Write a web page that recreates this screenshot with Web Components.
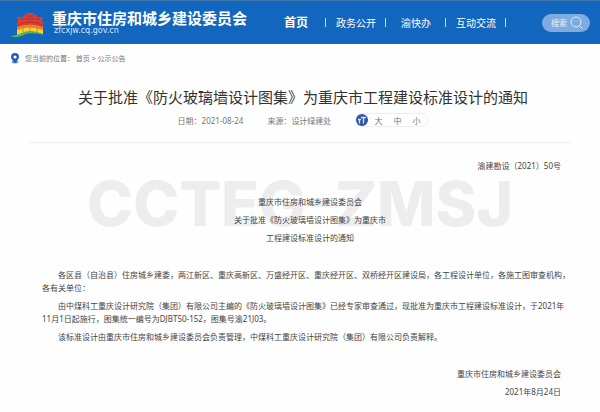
<!DOCTYPE html>
<html lang="zh-CN">
<head>
<meta charset="UTF-8">
<meta name="viewport" content="width=device-width, initial-scale=1">
<title>重庆市住房和城乡建设委员会</title>
<style>
    body {
        margin: 0;
        background-color: #fefefe;
        color: #444;
        font-family: "Noto Sans", "Noto Sans CJK SC", sans-serif;
        font-size: 8px;
    }
</style>
</head>
<body>
<site-header>
    <a slot="nav" class="current" href="#">首页</a>
    <a slot="nav" href="#">政务公开</a>
    <a slot="nav" href="#">渝快办</a>
    <a slot="nav" href="#">互动交流</a>
</site-header>
<bread-crumb></bread-crumb>
<notice-article>
    <span slot="title">关于批准《防火玻璃墙设计图集》为重庆市工程建设标准设计的通知</span>
    <span slot="date">2021-08-24</span>
    <span slot="source">设计绿建处</span>
    <font-sizer slot="tools"></font-sizer>
    <notice-body></notice-body>
</notice-article>

<script>
class SiteHeader extends HTMLElement {
    constructor() {
        super();
        this.attachShadow({ mode: 'open' });
    }

    connectedCallback() {
        this.render();
    }

    render() {
        this.shadowRoot.innerHTML = `
            <style>
                :host {
                    display: block;
                    background-color: #1366be;
                    border-top: 1px solid #3f76ac;
                    color: white;
                }
                header {
                    display: flex;
                    align-items: center;
                    height: 43px;
                    padding: 0 10px;
                }
                .logo {
                    width: 36px;
                    height: 28px;
                    margin-top: 2px;
                }
                .brand {
                    margin-left: 6px;
                    line-height: 1;
                }
                .name {
                    font-size: 15px;
                    font-weight: bold;
                    line-height: 16px;
                    white-space: nowrap;
                }
                .domain {
                    font: 8px/9px "DejaVu Sans", sans-serif;
                    color: #d5e6f8;
                    padding-left: 2px;
                }
                nav {
                    flex: 1;
                    display: grid;
                    grid-template-columns: 60px 60px 60px 60px;
                    margin-left: 19px;
                }
                ::slotted(a) {
                    color: white;
                    font-size: 10px;
                    line-height: 12px;
                    text-align: center;
                    text-decoration: none;
                    background: linear-gradient(#c3dcf5, #c3dcf5) right center / 1px 9px no-repeat;
                }
                ::slotted(a.current) {
                    font-size: 12px;
                    font-weight: bold;
                }
                form {
                    display: flex;
                    align-items: center;
                    width: 48px;
                    height: 18px;
                    box-sizing: border-box;
                    padding: 0 7px 0 9px;
                    border-radius: 9px;
                    background-color: #7eace0;
                }
                input {
                    flex: 1;
                    min-width: 0;
                    padding: 0;
                    border: 0;
                    outline: 0;
                    background: none;
                    color: white;
                    font: inherit;
                }
                input::placeholder {
                    color: #e8f2fc;
                }
                button {
                    display: flex;
                    padding: 0;
                    border: 0;
                    background: none;
                    cursor: pointer;
                }
            </style>
            <header>
                <svg class="logo" viewBox="0 0 36 28" aria-hidden="true">
                    <path d="M7 7h6V5h3V3h8v2h3v2h6l-1 4 1 4v4l-7-2H14l-7 3v-5l1-4z" fill="#e23b30"/>
                    <path d="M10 9h5M25 9h5M17 6h6M16 9h8" stroke="#8e3a4a" stroke-width="1"/>
                    <path d="M8 15q12-6 24 0" fill="none" stroke="#9c3a3a" stroke-width="1"/>
                    <path d="M7 17q13-5 26 0v3q-13-4-26 1z" fill="#f08022"/>
                    <path d="M7 20q13-5 26 0v4q-13-5-26 1z" fill="#f4d435"/>
                    <path d="M13 16v6M20 15v6M27 16v6" stroke="#c8862e" stroke-width="1"/>
                    <path d="M0 26q9-1 14-4 9-3 20 3-11-3-18-1-8 5-16 2z" fill="#55b553"/>
                </svg>
                <div class="brand">
                    <div class="name">重庆市住房和城乡建设委员会</div>
                    <div class="domain">zfcxjw.cq.gov.cn</div>
                </div>
                <nav><slot name="nav"></slot></nav>
                <form>
                    <input type="text" placeholder="搜索" aria-label="搜索">
                    <button type="button" aria-label="提交搜索">
                        <svg width="13" height="13" viewBox="0 0 13 13" fill="none" stroke="#d9e9fa" stroke-width="1">
                            <circle cx="6" cy="6" r="5"/>
                            <path d="M9.500 9.500l3 3"/>
                        </svg>
                    </button>
                </form>
            </header>
        `;
    }
}

class BreadCrumb extends HTMLElement {
    constructor() {
        super();
        this.attachShadow({ mode: 'open' });
    }

    connectedCallback() {
        this.shadowRoot.innerHTML = `
            <style>
                :host {
                    display: flex;
                    align-items: center;
                    gap: 6px;
                    height: 28px;
                    padding: 0 11px;
                    color: #777;
                    font-size: 7px;
                }
                a {
                    color: inherit;
                    text-decoration: none;
                }
            </style>
            <svg width="8" height="11" viewBox="0 0 8 11" aria-hidden="true">
                <path d="M0 9q4-3 8 0-4 3-8 0z" fill="#5b93cd"/>
                <path d="M4 10Q0 6 0 4a4 4 0 0 1 8 0q0 2-4 6z" fill="#1f5fae"/>
                <circle cx="4" cy="4" r="1.600" fill="#fff"/>
            </svg>
            <span>您当前的位置： <a href="#">首页</a> &gt; <a href="#">公示公告</a></span>
        `;
    }
}

class FontSizer extends HTMLElement {
    constructor() {
        super();
        this.attachShadow({ mode: 'open' });
    }

    connectedCallback() {
        this.shadowRoot.innerHTML = `
            <style>
                :host {
                    display: flex;
                    align-items: center;
                    gap: 11px;
                    height: 14px;
                    box-sizing: border-box;
                    padding-right: 7px;
                    border: 1px solid #eee;
                    border-radius: 7px;
                }
                svg {
                    margin-right: -5px;
                }
                button {
                    padding: 0;
                    border: 0;
                    background: none;
                    color: #777;
                    font: inherit;
                    cursor: pointer;
                }
            </style>
            <svg width="12" height="12" viewBox="0 0 12 12" aria-hidden="true">
                <circle cx="6" cy="6" r="6" fill="#2f55a4"/>
                <path d="M5 3.500h5M7.500 3.500v6M2 5.500h3M3.500 5.500v4" stroke="#dfe8fa" stroke-width="1.300"/>
            </svg>
            <button type="button">大</button>
            <button type="button">中</button>
            <button type="button">小</button>
        `;
    }
}

class NoticeArticle extends HTMLElement {
    constructor() {
        super();
        this.attachShadow({ mode: 'open' });
    }

    connectedCallback() {
        this.shadowRoot.innerHTML = `
            <style>
                :host {
                    display: block;
                    padding: 14px 30px 0;
                }
                h1 {
                    margin: 0;
                    color: #333;
                    font-size: 15px;
                    font-weight: normal;
                    line-height: 22px;
                    text-align: center;
                    padding-left: 6px;
                }
                .meta {
                    display: flex;
                    justify-content: center;
                    align-items: center;
                    gap: 24px;
                    height: 14px;
                    padding: 5px 0 15px 6px;
                    border-bottom: 1px solid #eee;
                    color: #777;
                }
            </style>
            <article>
                <h1><slot name="title"></slot></h1>
                <div class="meta">
                    <span>日期：<slot name="date"></slot></span>
                    <span>来源：<slot name="source"></slot></span>
                    <slot name="tools"></slot>
                </div>
                <slot></slot>
            </article>
        `;
    }
}

class NoticeBody extends HTMLElement {
    constructor() {
        super();
        this.attachShadow({ mode: 'open' });
    }

    connectedCallback() {
        this.shadowRoot.innerHTML = `
            <style>
                :host {
                    display: block;
                    position: relative;
                    padding: 16px 0 8px 12px;
                    line-height: 13px;
                }
                p {
                    position: relative;
                    margin: 0 0 5px;
                }
                .number, .sign {
                    padding-right: 9px;
                    text-align: right;
                }
                .heading {
                    margin: 23px 0 24px;
                    padding-left: 8px;
                    text-align: center;
                }
                .text {
                    text-indent: 2em;
                }
                footer {
                    margin-top: 24px;
                }
                .watermark {
                    position: absolute;
                    top: 31px;
                    left: 0;
                    right: 0;
                    color: #ededed;
                    font: 800 62px/60px Inter, sans-serif;
                    text-align: center;
                }
            </style>
            <div class="watermark">CCTEG-ZMSJ</div>
            <p class="number">渝建勘设〔2021〕50号</p>
            <div class="heading">
                <p>重庆市住房和城乡建设委员会</p>
                <p>关于批准《防火玻璃墙设计图集》为重庆市</p>
                <p>工程建设标准设计的通知</p>
            </div>
            <p class="text">各区县（自治县）住房城乡建委，两江新区、重庆高新区、万盛经开区、重庆经开区、双桥经开区建设局，各工程设计单位，各施工图审查机构，各有关单位：</p>
            <p class="text">由中煤科工重庆设计研究院（集团）有限公司主编的《防火玻璃墙设计图集》已经专家审查通过，现批准为重庆市工程建设标准设计，于2021年11月1日起施行，图集统一编号为DJBT50-152，图集号渝21J03。</p>
            <p class="text">该标准设计由重庆市住房和城乡建设委员会负责管理，中煤科工重庆设计研究院（集团）有限公司负责解释。</p>
            <footer>
                <p class="sign">重庆市住房和城乡建设委员会</p>
                <p class="sign">2021年8月24日</p>
            </footer>
        `;
    }
}

customElements.define('site-header', SiteHeader);
customElements.define('bread-crumb', BreadCrumb);
customElements.define('font-sizer', FontSizer);
customElements.define('notice-article', NoticeArticle);
customElements.define('notice-body', NoticeBody);
</script>
</body>
</html>
